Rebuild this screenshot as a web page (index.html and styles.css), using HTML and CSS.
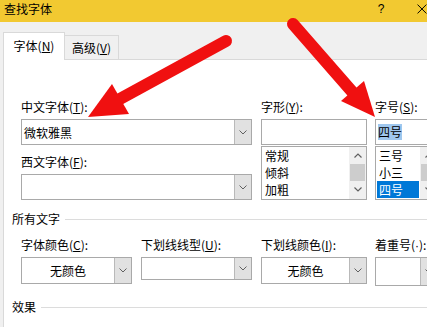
FILE: index.html
```html
<!DOCTYPE html>
<html lang="zh-CN">
<head>
    <meta charset="UTF-8">
    <meta name="viewport" content="width=device-width, initial-scale=1.0">
    <title>查找字体</title>
    <link rel="stylesheet" href="styles.css">
</head>
<body>
    <div class="window">
        <div class="titlebar">
            <span class="title">查找字体</span>
            <span class="help">?</span>
            <svg class="close" width="10" height="10" viewBox="0 0 10 10"><path d="M0.5 0.5 L9.5 9.5 M9.5 0.5 L0.5 9.5" stroke="#000" stroke-width="1"/></svg>
        </div>

        <div class="tabs">
            <div class="tab active">字体(<u>N</u>)</div>
            <div class="tab">高级(<u>V</u>)</div>
        </div>

        <div class="panel">
            <div class="grid top">
                <div class="col-font">
                    <div class="label">中文字体(<u>T</u>):</div>
                    <div class="combo">
                        <span class="value">微软雅黑</span>
                        <span class="drop"><svg width="8" height="5" viewBox="0 0 8 5"><path d="M0.5 0.5 L4 4 L7.5 0.5" fill="none" stroke="#606060"/></svg></span>
                    </div>
                    <div class="label second">西文字体(<u>F</u>):</div>
                    <div class="combo">
                        <span class="value"></span>
                        <span class="drop"><svg width="8" height="5" viewBox="0 0 8 5"><path d="M0.5 0.5 L4 4 L7.5 0.5" fill="none" stroke="#606060"/></svg></span>
                    </div>
                </div>

                <div class="col-style">
                    <div class="label">字形(<u>Y</u>):</div>
                    <div class="edit"></div>
                    <div class="listbox">
                        <ul class="items">
                            <li>常规</li>
                            <li>倾斜</li>
                            <li>加粗</li>
                        </ul>
                        <div class="scrollbar">
                            <span class="sb-btn"><svg width="8" height="5" viewBox="0 0 8 5"><path d="M0.5 4.5 L4 1 L7.5 4.5" fill="none" stroke="#606060" stroke-width="1.2"/></svg></span>
                            <span class="thumb"></span>
                            <span class="sb-btn"><svg width="8" height="5" viewBox="0 0 8 5"><path d="M0.5 0.5 L4 4 L7.5 0.5" fill="none" stroke="#606060" stroke-width="1.2"/></svg></span>
                        </div>
                    </div>
                </div>

                <div class="col-size">
                    <div class="label">字号(<u>S</u>):</div>
                    <div class="edit"><span class="sel-text">四号</span></div>
                    <div class="listbox">
                        <ul class="items">
                            <li>三号</li>
                            <li>小三</li>
                            <li class="selected">四号</li>
                        </ul>
                        <div class="scrollbar">
                            <span class="sb-btn"><svg width="8" height="5" viewBox="0 0 8 5"><path d="M0.5 4.5 L4 1 L7.5 4.5" fill="none" stroke="#606060" stroke-width="1.2"/></svg></span>
                            <span class="thumb"></span>
                            <span class="sb-btn"><svg width="8" height="5" viewBox="0 0 8 5"><path d="M0.5 0.5 L4 4 L7.5 0.5" fill="none" stroke="#606060" stroke-width="1.2"/></svg></span>
                        </div>
                    </div>
                </div>
            </div>

            <div class="section first">所有文字</div>

            <div class="grid bottom">
                <div>
                    <div class="label">字体颜色(<u>C</u>):</div>
                    <div class="combo color">
                        <span class="value">无颜色</span>
                        <span class="drop"><svg width="8" height="5" viewBox="0 0 8 5"><path d="M0.5 0.5 L4 4 L7.5 0.5" fill="none" stroke="#606060"/></svg></span>
                    </div>
                </div>
                <div>
                    <div class="label">下划线线型(<u>U</u>):</div>
                    <div class="combo short">
                        <span class="value"></span>
                        <span class="drop"><svg width="8" height="5" viewBox="0 0 8 5"><path d="M0.5 0.5 L4 4 L7.5 0.5" fill="none" stroke="#606060"/></svg></span>
                    </div>
                </div>
                <div>
                    <div class="label">下划线颜色(<u>I</u>):</div>
                    <div class="combo color">
                        <span class="value">无颜色</span>
                        <span class="drop"><svg width="8" height="5" viewBox="0 0 8 5"><path d="M0.5 0.5 L4 4 L7.5 0.5" fill="none" stroke="#606060"/></svg></span>
                    </div>
                </div>
                <div class="col-size">
                    <div class="label">着重号(<span class="dot">·</span>):</div>
                    <div class="combo tall">
                        <span class="value"></span>
                        <span class="drop"><svg width="8" height="5" viewBox="0 0 8 5"><path d="M0.5 0.5 L4 4 L7.5 0.5" fill="none" stroke="#606060"/></svg></span>
                    </div>
                </div>
            </div>

            <div class="section last">效果</div>
        </div>

        <!-- red annotation arrows drawn over the dialog -->
        <svg class="arrows" width="427" height="327" viewBox="0 0 427 327">
            <line x1="226" y1="41" x2="118" y2="100" stroke="#f01010" stroke-width="12" stroke-linecap="round"/>
            <polygon points="88,117 112,84 129,114" fill="#f01010"/>
            <line x1="293" y1="24" x2="355" y2="95" stroke="#f01010" stroke-width="12" stroke-linecap="round"/>
            <polygon points="375,117 341,101 364,81" fill="#f01010"/>
        </svg>
    </div>
</body>
</html>
```

FILE: styles.css
```css
body {
    margin: 0;
    background-color: #f0f0f0;
    font-family: "Noto Sans CJK SC", "Microsoft YaHei", sans-serif;
    font-size: 12px;
    color: #000;
}
.window {
    position: relative;
    width: 427px;
    height: 327px;
    overflow: hidden;
    background-color: #f0f0f0;
}
.titlebar {
    display: flex;
    align-items: flex-start;
    height: 22px;
    box-sizing: border-box;
    padding: 1px 0 0 4px;
    line-height: 16px;
    background-color: #f2c931;
}
.title {
    width: 376px;
}
.help {
    width: 12px;
    text-align: center;
    font-family: "Liberation Sans", sans-serif;
}
.close {
    margin: 3px 0 0 30px;
}
.tabs {
    display: flex;
    align-items: flex-end;
    height: 37px;
    padding-left: 3px;
}
.tab {
    box-sizing: border-box;
    width: 54px;
    height: 24px;
    line-height: 23px;
    text-align: center;
    border-top: 1px solid #d9d9d9;
    border-right: 1px solid #d9d9d9;
}
.tab.active {
    position: relative;
    z-index: 1;
    width: 62px;
    height: 28px;
    line-height: 26px;
    margin-bottom: -1px;
    border-left: 1px solid #d9d9d9;
    background-color: #fff;
}
u {
    text-underline-offset: 1px;
}
.dot {
    font-family: "Liberation Sans", sans-serif;
}
.panel {
    margin-left: 3px;
    height: 300px;
    padding: 39px 0 0 17px;
    border-top: 1px solid #d9d9d9;
    border-left: 1px solid #d9d9d9;
    background-color: #fff;
}
.grid {
    display: grid;
    grid-template-columns: 111px 111px 106px 62px;
    column-gap: 9px;
    align-items: start;
}
.col-font {
    grid-column: 1 / 3;
}
.col-size {
    margin-left: -1px;
}
.label {
    height: 16px;
    line-height: 16px;
    margin-bottom: 4px;
    white-space: nowrap;
}
.label.second {
    margin-top: 9px;
}
.combo {
    display: flex;
    box-sizing: border-box;
    height: 26px;
    border: 1px solid #a9a9a9;
    background-color: #fff;
}
.combo.color {
    height: 27px;
}
.combo.short {
    height: 23px;
}
.combo.tall {
    height: 29px;
}
.combo .value {
    flex: 1;
    display: flex;
    align-items: center;
    padding-left: 2px;
    white-space: nowrap;
}
.combo.color .value {
    justify-content: center;
    padding-left: 0;
}
.drop {
    display: flex;
    align-items: center;
    justify-content: center;
    box-sizing: border-box;
    width: 17px;
    border-left: 1px solid #b9b9b9;
    background-color: #e1e1e1;
}
.edit {
    box-sizing: border-box;
    height: 26px;
    padding-left: 2px;
    border: 1px solid #a9a9a9;
    display: flex;
    align-items: center;
}
.sel-text {
    line-height: 16px;
    background-color: #9fc7ee;
}
.listbox {
    display: flex;
    box-sizing: border-box;
    height: 54px;
    margin-top: 1px;
    border: 1px solid #a9a9a9;
}
.items {
    flex: 1;
    margin: 0;
    padding: 0;
    list-style: none;
    overflow: hidden;
}
.items li {
    height: 17px;
    line-height: 17px;
    padding-left: 3px;
    white-space: nowrap;
}
.items li.selected {
    margin: 0 1px;
    padding-left: 2px;
    background-color: #0078d7;
    color: #fff;
}
.scrollbar {
    display: flex;
    flex-direction: column;
    width: 17px;
    background-color: #f0f0f0;
}
.sb-btn {
    display: flex;
    align-items: center;
    justify-content: center;
    height: 17px;
}
.thumb {
    height: 17px;
    margin: 0 1px;
    background-color: #cdcdcd;
}
.section {
    display: flex;
    align-items: center;
    height: 16px;
    line-height: 16px;
    margin-left: -9px;
    width: 420px;
}
.section::after {
    content: "";
    flex: 1;
    height: 1px;
    margin-left: 5px;
    background-color: #dcdcdc;
}
.section.first {
    margin-top: 11px;
}
.grid.bottom {
    margin-top: 10px;
}
.section.last {
    margin-top: 13px;
}
.arrows {
    position: absolute;
    left: 0;
    top: 0;
    pointer-events: none;
}
```
